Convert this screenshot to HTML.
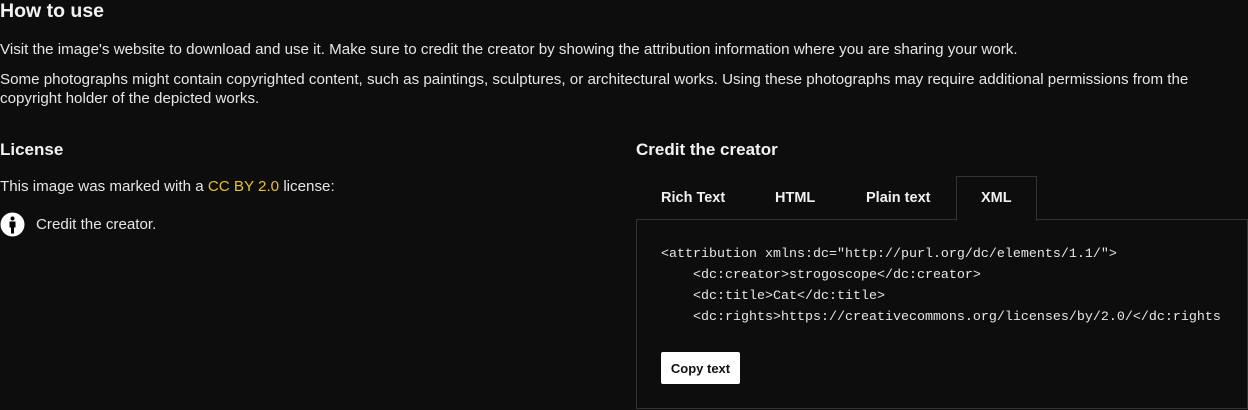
<!DOCTYPE html><html><head><style>
body{margin:0;background:#0d0d0d;color:#e6e6e6;font-family:"Liberation Sans",sans-serif;width:1248px;height:410px;overflow:hidden;position:relative}
div,span{position:absolute;white-space:pre}
.h{font-weight:bold;font-size:17px;color:#f2f2f2}
.p{font-size:15.15px}
.tab{font-weight:bold;font-size:14.5px;color:#f0f0f0;top:190px}
.code{font-family:"Liberation Mono",monospace;font-size:13.33px;color:#e6e6e6;left:661px}
</style></head><body>
<div class="h" style="left:0;top:0;font-size:19.5px">How to use</div>
<div class="p" style="left:0;top:41px">Visit the image's website to download and use it. Make sure to credit the creator by showing the attribution information where you are sharing your work.</div>
<div class="p" style="left:0;top:71px">Some photographs might contain copyrighted content, such as paintings, sculptures, or architectural works. Using these photographs may require additional permissions from the</div>
<div class="p" style="left:0;top:90px">copyright holder of the depicted works.</div>
<div class="h" style="left:0;top:140px">License</div>
<div class="p" style="left:0;top:178px">This image was marked with a <span style="position:static;color:#e8c12b">CC BY 2.0</span> license:</div>
<svg style="position:absolute;left:0;top:212px" width="25" height="25" viewBox="0 0 25 25"><circle cx="12.5" cy="12.5" r="12" fill="#fff"/><circle cx="12.5" cy="6.5" r="2" fill="#000"/><path d="M9.5 9.5h6v6h-1.5v6h-3v-6h-1.5z" fill="#000"/></svg>
<div class="p" style="left:36px;top:216px">Credit the creator.</div>
<div class="h" style="left:636px;top:140px">Credit the creator</div>
<div style="left:636px;top:219px;width:610px;height:188px;border:1px solid #333"></div>
<div style="left:956px;top:176px;width:79px;height:44px;border:1px solid #333;border-bottom:none;background:#0d0d0d"></div>
<div class="tab" style="left:661px">Rich Text</div>
<div class="tab" style="left:775px">HTML</div>
<div class="tab" style="left:866px">Plain text</div>
<div class="tab" style="left:981px">XML</div>
<div class="code" style="top:247px">&lt;attribution xmlns:dc="http://purl.org/dc/elements/1.1/"&gt;</div>
<div class="code" style="top:268px">    &lt;dc:creator&gt;strogoscope&lt;/dc:creator&gt;</div>
<div class="code" style="top:289px">    &lt;dc:title&gt;Cat&lt;/dc:title&gt;</div>
<div class="code" style="top:310px">    &lt;dc:rights&gt;https://creativecommons.org/licenses/by/2.0/&lt;/dc:rights</div>
<div style="left:661px;top:352px;width:79px;height:32px;background:#fff;border-radius:2px;color:#111;font-weight:bold;font-size:13px;text-align:center;line-height:33px">Copy text</div>
</body></html>
